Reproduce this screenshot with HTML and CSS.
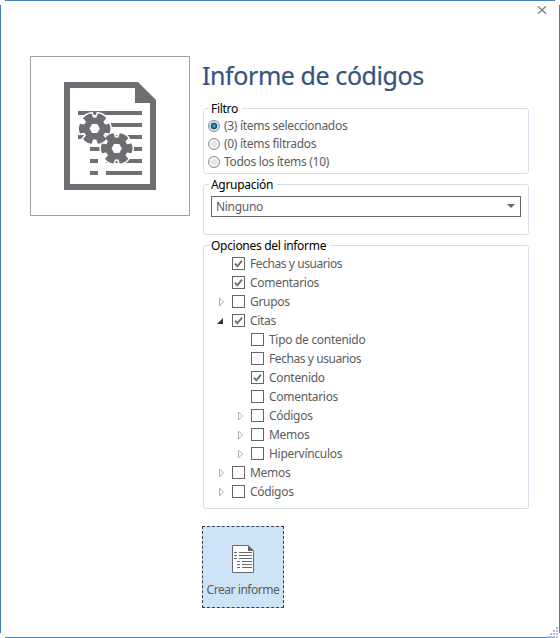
FILE: index.html
```html
<!DOCTYPE html>
<html lang="es">
<head>
<meta charset="utf-8">
<title>Informe de códigos</title>
<link rel="stylesheet" href="styles.css">
</head>
<body>
<svg width="0" height="0" class="defs">
  <defs>
    <path id="tooth" d="M8-3.6L14.7-4.9Q15.9-2 15.8 0Q15.9 2 14.7 4.9L8 3.6Z"/>
    <g id="gear">
      <circle r="11"/>
      <use href="#tooth"/><use href="#tooth" transform="rotate(60)"/><use href="#tooth" transform="rotate(120)"/>
      <use href="#tooth" transform="rotate(180)"/><use href="#tooth" transform="rotate(240)"/><use href="#tooth" transform="rotate(300)"/>
    </g>
    <path id="hole" d="M-5.2 0L-2.6-4.5H2.6L5.2 0L2.6 4.5H-2.6Z"/>
    <path id="check" d="M3 6.2L5.3 8.8L10 3.2" fill="none" stroke="#6c6c6c" stroke-width="1.8"/>
    <path id="closed" d="M1.5 1L5.5 5L1.5 9Z" fill="#fff" stroke="#b0b0b0"/>
    <path id="open" d="M6 2V8H0Z" fill="#333"/>
  </defs>
</svg>
<main class="window">
  <i class="edge top"></i><i class="edge bottom"></i><i class="edge left"></i><i class="edge right"></i>
  <svg class="close" width="10" height="8" viewBox="0 0 10 8"><path d="M1 .3L9 7.7M9 .3L1 7.7" stroke="#858585" stroke-width="1.5"/></svg>
  <div class="picture">
    <svg width="92" height="108" viewBox="0 0 92 108" fill="#6d6e71">
      <path fill-rule="evenodd" d="M0 0H74L92 18V108H0ZM6 6V102H86V21H71V6Z"/>
      <path d="M14 29H78V33H14ZM40 41H78V45H40ZM14 53H78V57H14ZM26 65H78V69H26ZM26 77H34V81H26ZM42 77H78V81H42ZM26 89H34V93H26ZM42 89H78V93H42Z"/>
      <g transform="translate(30.7 46.6)"><use href="#gear" fill="#fff" stroke="#fff" stroke-width="3"/></g>
      <g transform="translate(52.7 66.4)"><use href="#gear" fill="#fff" stroke="#fff" stroke-width="3"/></g>
      <g transform="translate(30.7 46.6)"><use href="#gear"/><use href="#hole" fill="#fff"/></g>
      <g transform="translate(52.7 66.4)"><use href="#gear"/><use href="#hole" fill="#fff"/></g>
    </svg>
  </div>
  <div class="content">
    <h1>Informe de códigos</h1>
    <fieldset class="filter">
      <legend>Filtro</legend>
      <div class="option"><i class="radio on"></i><span>(3) ítems seleccionados</span></div>
      <div class="option"><i class="radio"></i><span>(0) ítems filtrados</span></div>
      <div class="option"><i class="radio"></i><span>Todos los ítems (10)</span></div>
    </fieldset>
    <fieldset class="grouping">
      <legend>Agrupación</legend>
      <div class="select"><span>Ninguno</span><svg width="8" height="4" viewBox="0 0 8 4"><path d="M0 0H8L4 4Z" fill="#666"/></svg></div>
    </fieldset>
    <fieldset class="tree">
      <legend>Opciones del informe</legend>
      <div class="row"><i class="arrow"></i><svg class="box"><use href="#check"/></svg><span class="users">Fechas y usuarios</span></div>
      <div class="row"><i class="arrow"></i><svg class="box"><use href="#check"/></svg><span>Comentarios</span></div>
      <div class="row"><svg class="arrow"><use href="#closed"/></svg><i class="box"></i><span>Grupos</span></div>
      <div class="row"><svg class="arrow expanded"><use href="#open"/></svg><svg class="box"><use href="#check"/></svg><span>Citas</span></div>
      <div class="row child"><i class="arrow"></i><i class="box"></i><span>Tipo de contenido</span></div>
      <div class="row child"><i class="arrow"></i><i class="box"></i><span class="users">Fechas y usuarios</span></div>
      <div class="row child"><i class="arrow"></i><svg class="box"><use href="#check"/></svg><span>Contenido</span></div>
      <div class="row child"><i class="arrow"></i><i class="box"></i><span>Comentarios</span></div>
      <div class="row child"><svg class="arrow"><use href="#closed"/></svg><i class="box"></i><span>Códigos</span></div>
      <div class="row child"><svg class="arrow"><use href="#closed"/></svg><i class="box"></i><span>Memos</span></div>
      <div class="row child"><svg class="arrow"><use href="#closed"/></svg><i class="box"></i><span>Hipervínculos</span></div>
      <div class="row"><svg class="arrow"><use href="#closed"/></svg><i class="box"></i><span>Memos</span></div>
      <div class="row"><svg class="arrow"><use href="#closed"/></svg><i class="box"></i><span>Códigos</span></div>
    </fieldset>
    <button class="create" type="button">
      <svg width="22" height="28" viewBox="0 0 22 28">
        <path d="M.5.5H16L21.5 6V27.5H.5Z" fill="#fff" stroke="#666870"/>
        <path d="M16 0L22 6H16Z" fill="#666870"/>
        <path d="M2 7.5H5M7 7.5H20M2 10.5H5M7 10.5H20M2 13.5H5M7 13.5H20M5 16.5H8M10 16.5H20M5 19.5H8M10 19.5H20M5 22.5H8M10 22.5H20" stroke="#666870"/>
      </svg>
      <span>Crear informe</span>
    </button>
  </div>
  <svg class="grip" width="12" height="12" viewBox="0 0 12 12" fill="#b5bcc9">
    <path d="M10 1h2v2h-2zM7 4h2v2h-2zM10 4h2v2h-2zM4 7h2v2h-2zM7 7h2v2h-2zM10 7h2v2h-2zM1 10h2v2h-2zM4 10h2v2h-2zM7 10h2v2h-2zM10 10h2v2h-2z"/>
  </svg>
</main>
</body>
</html>
```
FILE: styles.css
```css
* { box-sizing: border-box; }
body { margin: 0; background: #fff; }
.defs { position: absolute; }
.window {
  position: relative;
  display: flex;
  align-items: flex-start;
  gap: 12px;
  width: 560px;
  height: 638px;
  padding: 56px 0 0 30px;
  font: 12px/18px "Noto Sans", sans-serif;
  letter-spacing: -0.3px;
  color: #5c5c5c;
  overflow: hidden;
}
.edge { position: absolute; background: #4a7ebb; }
.top, .bottom { left: 5px; right: 5px; height: 1px; }
.left, .right { top: 5px; bottom: 5px; width: 1px; }
.top { top: 0; }
.bottom { bottom: 0; }
.left { left: 0; }
.right { right: 0; }
.close { position: absolute; left: 537px; top: 6px; }
.grip { position: absolute; right: 2px; bottom: 0; }
.picture {
  display: flex;
  width: 160px;
  height: 160px;
  padding: 25px 33px;
  border: 1px solid #a3a3a3;
}
.content { width: 327px; }
h1 {
  height: 42px;
  margin: 0 0 3px;
  font-size: 25px;
  font-weight: 400;
  line-height: 38px;
  letter-spacing: -0.42px;
  -webkit-text-stroke: 0.2px #345580;
  color: #345580;
  white-space: nowrap;
}
fieldset {
  width: 326px;
  min-width: 0;
  margin: 0 0 3px 1px;
  padding: 0;
  border: 1px solid #d5dfe9;
  border-radius: 3px;
}
legend {
  height: 15px;
  margin-left: 5px;
  padding: 0 4px 0 2px;
  line-height: 15px;
  color: #000;
  white-space: nowrap;
}
.filter { height: 73px; }
.grouping { height: 58px; }
.tree { height: 271px; }
.option { display: flex; align-items: center; gap: 4px; height: 18px; padding-left: 4px; }
.filter .option:nth-of-type(1) { margin-top: 1px; }
.radio {
  width: 12px;
  height: 12px;
  border: 1px solid #8e8f8f;
  border-radius: 50%;
  background: radial-gradient(circle, #e2e2e2 25%, #eee 45%, #fff 60%, #d5d5d5 75%);
}
.radio.on { background: radial-gradient(circle at 50% 50%, #5fc4ec 0, #1681b8 22%, #164468 46%, #eef2f5 52%, #c8d0d6 75%); }
.select {
  display: flex;
  align-items: center;
  justify-content: space-between;
  width: 310px;
  height: 21px;
  margin: 4px 0 0 7px;
  padding: 0 5px 0 4px;
  border: 1px solid #666;
}
.select svg { margin-bottom: 2px; }
.row { display: flex; align-items: center; height: 19px; padding-left: 14px; white-space: nowrap; }
.tree .row:nth-of-type(1) { margin-top: 1px; }
.child { padding-left: 33px; }
.users { letter-spacing: -0.43px; }
.arrow { width: 7px; height: 10px; margin-right: 7px; }
.box { width: 13px; height: 13px; margin-right: 5px; border: 1px solid #666; overflow: visible; }
svg.box use { transform: translate(-1px, -0.5px); }
.expanded { margin: 0 8px 0 -1px; overflow: visible; }
.create {
  display: flex;
  flex-direction: column;
  align-items: center;
  width: 82px;
  height: 82px;
  margin-top: 17px;
  padding: 18px 0 0;
  border: 1px dashed #333f4c;
  background: #cde4f7;
  font: inherit;
  letter-spacing: -0.45px;
  color: inherit;
  white-space: nowrap;
}
.create span { margin-top: 8px; }
```
